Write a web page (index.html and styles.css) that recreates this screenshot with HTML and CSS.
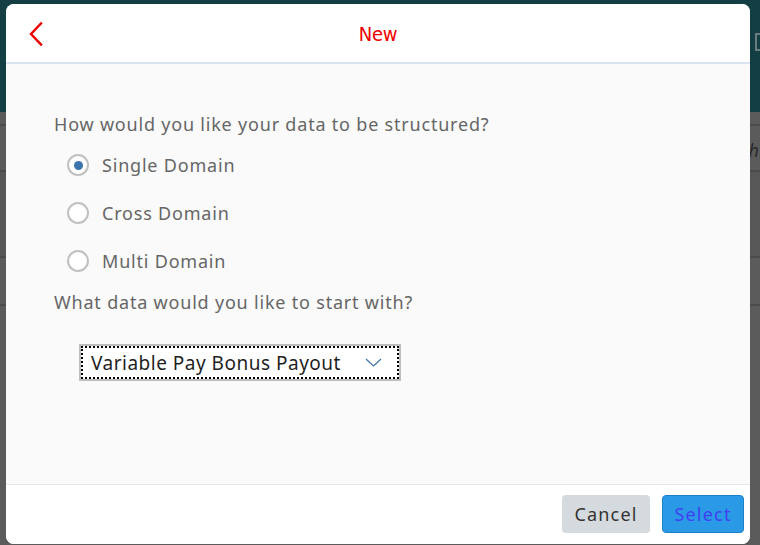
FILE: index.html
```html
<!DOCTYPE html>
<html lang="en">
<head>
  <meta charset="UTF-8" />
  <title>New</title>
  <link rel="stylesheet" href="styles.css">
</head>
<body>
<div class="app">
  <div class="app-header">
    <span class="app-icon"></span>
  </div>
  <div class="app-row row-a"><span class="app-text">h</span></div>
  <div class="app-row row-b"></div>
  <div class="app-row row-c"></div>
</div>

<!-- Dialog -->
<div class="dialog">
  <div class="dialog-header">
    <button class="back-btn" aria-label="Back">
      <svg width="18" height="28" viewBox="0 0 18 28">
        <polyline points="14,3.5 4,14 14,24.5" fill="none" stroke="#e00" stroke-width="2.4" stroke-linecap="square"/>
      </svg>
    </button>
    <h1 class="dialog-title">New</h1>
  </div>

  <div class="dialog-body">
    <p class="question">How would you like your data to be structured?</p>
    <div class="radio-group">
      <label class="radio-row"><span class="radio checked"></span>Single Domain</label>
      <label class="radio-row"><span class="radio"></span>Cross Domain</label>
      <label class="radio-row"><span class="radio"></span>Multi Domain</label>
    </div>
    <p class="question second">What data would you like to start with?</p>
    <div class="select-box">
      <div class="select-inner">
        <span>Variable Pay Bonus Payout</span>
        <svg width="17" height="9" viewBox="0 0 17 9">
          <polyline points="1,1 8.5,8 16,1" fill="none" stroke="#3f74ad" stroke-width="1.2"/>
        </svg>
      </div>
    </div>
  </div>

  <div class="dialog-footer">
    <button class="btn btn-cancel">Cancel</button>
    <button class="btn btn-select">Select</button>
  </div>
</div>
</body>
</html>
```

FILE: styles.css
```css
* { box-sizing: border-box; }
body {
  margin: 0;
  width: 760px;
  height: 545px;
  overflow: hidden;
  font-family: 'Noto Sans', 'Open Sans', sans-serif;
  background: #5b5b5b;
  position: relative;
}
.app { width: 100%; height: 100%; }
.app-header {
  height: 112px;
  background: #133f44;
  position: relative;
}
.app-icon {
  position: absolute;
  right: -4px; top: 33px;
  width: 9px; height: 18px;
  border: 2px solid #6a7c7e;
}
.app-row { border-bottom: 2px solid #4b4b4b; position: relative; }
.row-a { height: 48px; border-top: 2px solid #4b4b4b; margin-top: 12px; }
.app-text {
  position: absolute; right: 1px; top: 12px;
  color: #2a2a2a; font-style: italic; font-size: 18px;
}
.row-b { height: 86px; background: #575757; }
.row-c { height: 48px; }

.dialog {
  position: absolute;
  left: 6px; top: 4px;
  width: 744px; height: 540px;
  background: #fafafa;
  border-radius: 8px;
  overflow: hidden;
  display: flex;
  flex-direction: column;
}
.dialog-header {
  height: 60px;
  background: #fff;
  border-bottom: 2px solid #d8e4f1;
  display: flex;
  align-items: center;
  justify-content: center;
  position: relative;
}
.back-btn {
  position: absolute;
  left: 21px; top: 16px;
  padding: 0; border: none; background: none;
  display: flex;
}
.dialog-title {
  margin: 1px 0 0;
  font-family: 'DejaVu Sans', sans-serif;
  font-stretch: condensed;
  font-weight: normal;
  font-size: 20px;
  color: #ee0000;
  letter-spacing: -0.3px;
}
.dialog-body {
  flex: 1;
  padding: 48px 0 0 48px;
  color: #666;
  font-size: 18px;
  letter-spacing: 0.8px;
}
.question { margin: 0; line-height: 24px; }
.question.second { margin-top: 5px; }
.radio-group { margin-top: 5px; }
.radio-row {
  display: flex;
  align-items: center;
  height: 48px;
  padding-left: 13px;
  gap: 13px;
}
.radio {
  width: 22px; height: 22px;
  border: 2px solid #c0c0c0;
  border-radius: 50%;
  background: #fff;
  display: flex;
  align-items: center;
  justify-content: center;
}
.radio.checked::after {
  content: '';
  width: 9px; height: 9px;
  border-radius: 50%;
  background: #3b74ad;
}
.select-box {
  margin: 30px 0 0 25px;
  width: 322px; height: 37px;
  border: 2px solid #bdbdbd;
  background: #fff;
}
.select-inner {
  height: 100%;
  border: 2px dotted #000;
  display: flex;
  align-items: center;
  justify-content: space-between;
  padding: 0 15px 0 8px;
  color: #1f1f1f;
  font-size: 19px;
  letter-spacing: 0.5px;
}
.dialog-footer {
  height: 60px;
  background: #fff;
  border-top: 1px solid #e6e6e6;
  display: flex;
  justify-content: flex-end;
  align-items: flex-start;
  gap: 12px;
  padding: 10px 6px 0 0;
}
.btn {
  height: 38px;
  border-radius: 4px;
  font-family: 'Noto Sans', 'Open Sans', sans-serif;
  font-size: 18px;
  letter-spacing: 1.2px;
  padding: 0 0 1px;
  cursor: pointer;
}
.btn-cancel {
  width: 88px;
  background: #d5dade;
  border: none;
  color: #333;
}
.btn-select {
  width: 82px;
  background: #2a9ae6;
  border: 1px solid #1c80c6;
  color: #4040f2;
}
```
